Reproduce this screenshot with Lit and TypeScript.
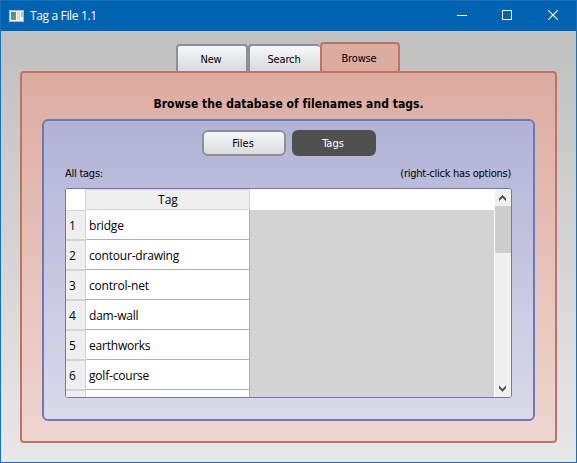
import { LitElement, html, css, svg } from "lit";
import { customElement, property } from "lit/decorators.js";

@customElement("title-bar")
class TitleBar extends LitElement {
  @property() heading = "";
  static styles = css`
    :host { display: flex; height: 31px; box-sizing: border-box; background: #0063b1; border-top: 1px solid #1a70b8; color: #fff; font: 12px/30px "Open Sans", "Noto Sans", sans-serif; align-items: center; }
    .icon { display: block; margin-left: 8px; }
    .name { flex: 1; margin-left: 6px; letter-spacing: -0.35px; white-space: nowrap; }
    .controls { display: block; width: 138px; height: 30px; }
  `;
  render() {
    return html`
      <svg class="icon" width="15" height="12" viewBox="0 0 15 12">
        <defs><linearGradient id="g" x1="0" y1="0" x2="1" y2="1"><stop offset="0" stop-color="#507ca8" /><stop offset="1" stop-color="#5aa870" /></linearGradient></defs>
        <rect width="15" height="12" fill="#b9b9b9" />
        <rect x="1" y="1" width="13" height="10" fill="#f4f4f4" />
        <rect x="2" y="2" width="5" height="8" fill="url(#g)" />
        <rect x="8" y="2" width="3" height="8" fill="#dcdcdc" />
        <rect x="12" y="2" width="2" height="5" fill="#a9c8b8" />
      </svg>
      <span class="name">${this.heading}</span>
      <svg class="controls" viewBox="0 0 138 30" fill="none" stroke="#fff">
        <path d="M19 14.5h10M64.500 9.500h9v9h-9z" />
        <path d="M110.300 9.300l9.400 9.400M119.700 9.300l-9.400 9.400" stroke-width="1.150" />
      </svg>
    `;
  }
}

@customElement("tag-table")
class TagTable extends LitElement {
  @property({ attribute: false }) rows: string[] = [];
  static styles = css`
    :host { display: flex; box-sizing: border-box; width: 447px; height: 210px; border: 1px solid #6d79b6; border-radius: 3px; background: #fff; overflow: hidden; font: 12px/30px "Open Sans", "Noto Sans", sans-serif; color: #000; }
    .view { width: 428px; flex: none; background: #d3d3d3; overflow: hidden; }
    .head { display: flex; height: 21px; background: #fff; }
    .corner { width: 19px; }
    .column { box-sizing: border-box; width: 165px; height: 21px; border: 1px solid #d3d3d3; background: #efefef; text-align: center; line-height: 20px; padding-left: 1px; }
    .row { display: flex; width: 184px; height: 30px; background: #fff; line-height: 32px; letter-spacing: -0.2px; }
    .num { box-sizing: border-box; width: 20px; height: 30px; padding-left: 3px; background: #efefef; border-right: 1px solid #d3d3d3; border-bottom: 1px solid #d3d3d3; box-shadow: inset 0 1px #d3d3d3; }
    .cell { box-sizing: border-box; width: 164px; height: 30px; padding-left: 3px; border-bottom: 1px solid #b0b0b0; border-right: 1px solid #b0b0b0; white-space: nowrap; }
    .bar { width: 16px; margin-left: 1px; background: #f0f0f0; }
    .bar svg { display: block; }
    .thumb { height: 47px; background: #cdcdcd; }
    .track { height: 127px; }
  `;
  render() {
    return html`
      <div class="view">
        <div class="head"><div class="corner"></div><div class="column">Tag</div></div>
        ${this.rows.map((name, i) => html`<div class="row"><div class="num">${i + 1}</div><div class="cell">${name}</div></div>`)}
        <div class="row"><div class="num"></div><div class="cell"></div></div>
      </div>
      <div class="bar">
        <svg width="16" height="17">${svg`<path d="M4 9.500L7.500 6L11 9.500V12.300L7.500 8.800L4 12.300z" fill="#505050" />`}</svg>
        <div class="thumb"></div>
        <div class="track"></div>
        <svg width="16" height="17">${svg`<path d="M4 5.500L7.500 9L11 5.500V8.300L7.500 11.800L4 8.300z" fill="#505050" />`}</svg>
      </div>
    `;
  }
}

@customElement("app-root")
class AppRoot extends LitElement {
  static styles = css`
    :host { display: block; height: 463px; color: #000; font: 11px/14px "DejaVu Sans Condensed", "DejaVu Sans", sans-serif; }
    * { box-sizing: border-box; }
    .window { height: 463px; border: solid #1a70b8; border-width: 0 1px 1px; background: linear-gradient(#c0c0c0 31px, #e8e8e8 462px); }
    .tabs { display: flex; align-items: flex-end; height: 40px; padding-left: 175px; }
    .tab { width: 72px; height: 27px; border: 2px solid #8f8f93; border-bottom: 0; border-radius: 4px 4px 0 0; background: linear-gradient(#f6f7fa, #dadbde); text-align: center; padding: 7px 2px 0 0; letter-spacing: -0.15px; }
    .search { border-right: 0; }
    .active { width: 80px; height: 29px; border-color: #bf7265; background: #ddaca1; padding-top: 8px; }
    .outer { width: 537px; height: 372px; margin-left: 19px; padding: 22px 20px 0; border: 2px solid #bf7265; border-radius: 4px; background: linear-gradient(#ddaca1, #efd6d0); }
    h1 { margin: 0; height: 24px; font-size: 12px; line-height: 18px; font-weight: bold; text-align: center; letter-spacing: 0.04px; white-space: nowrap; }
    .inner { width: 493px; height: 302px; border: 2px solid #6d79b6; border-radius: 6px; background: linear-gradient(#b2b2d7, #dadaea); padding: 9px 21px 0; }
    .switch { display: flex; gap: 6px; padding-left: 137px; }
    .button { width: 84px; height: 26px; border: 2px solid #8f8f93; border-radius: 6px; background: linear-gradient(#f6f7fa, #dadbde); text-align: center; line-height: 24px; padding-right: 2px; letter-spacing: 0; }
    .selected { background: #505050; border-color: #505050; color: #fff; }
    .captions { display: flex; justify-content: space-between; width: 446px; height: 32px; padding-top: 11px; letter-spacing: -0.25px; white-space: nowrap; }
  `;
  private tags = ["bridge", "contour-drawing", "control-net", "dam-wall", "earthworks", "golf-course"];
  render() {
    return html`
      <div class="window">
        <title-bar heading="Tag a File 1.1"></title-bar>
        <div class="tabs">
          <div class="tab"><span>New</span></div>
          <div class="tab search"><span>Search</span></div>
          <div class="tab active"><span>Browse</span></div>
        </div>
        <div class="outer">
          <h1>Browse the database of filenames and tags.</h1>
          <div class="inner">
            <div class="switch"><div class="button">Files</div><div class="button selected">Tags</div></div>
            <div class="captions"><span>All tags:</span><span>(right-click has options)</span></div>
            <tag-table .rows=${this.tags}></tag-table>
          </div>
        </div>
      </div>
    `;
  }
}
